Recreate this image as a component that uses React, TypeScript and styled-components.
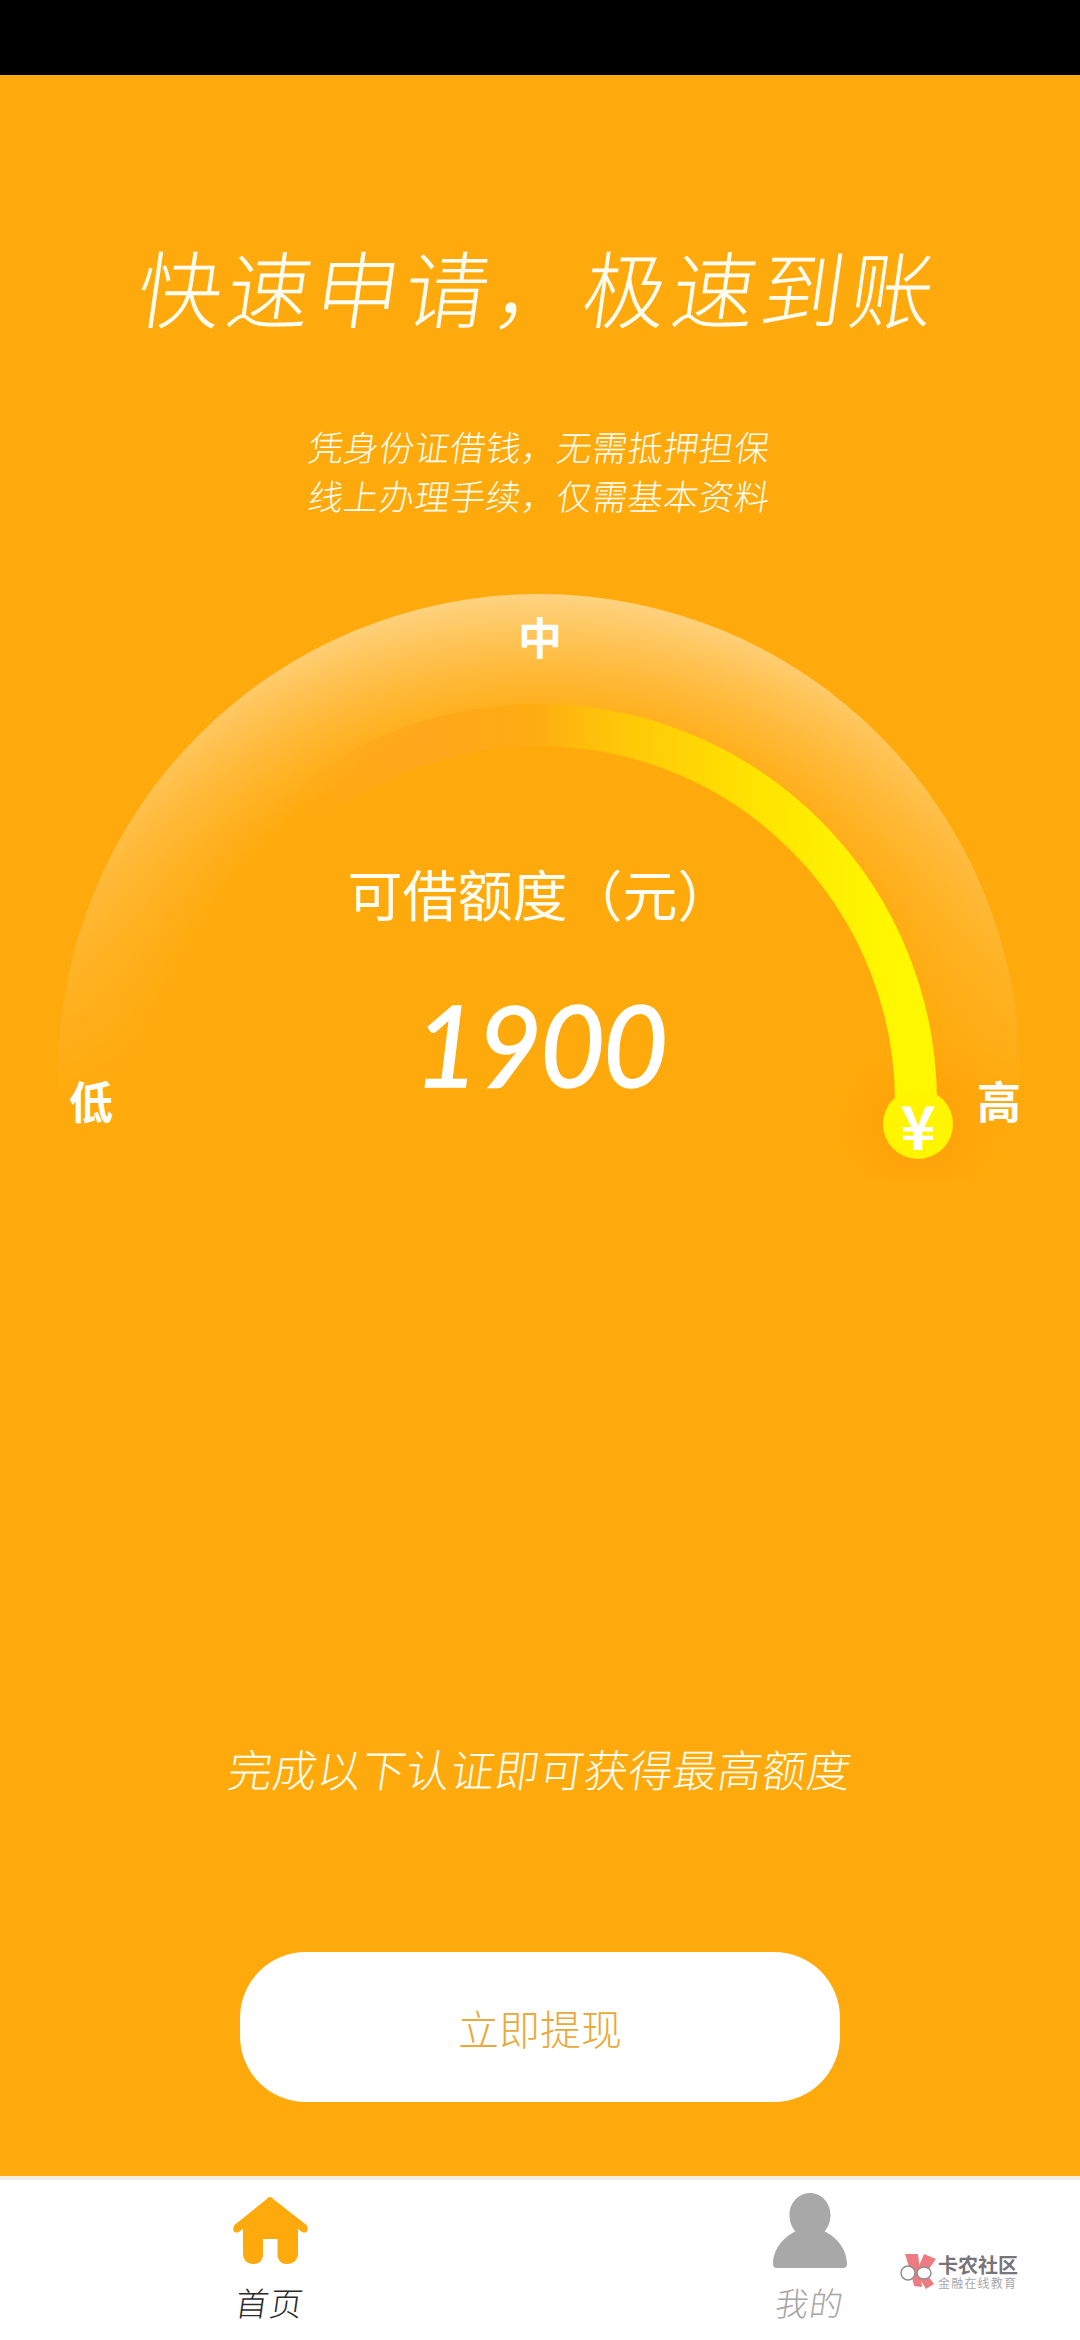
import React from "react";
import styled, { createGlobalStyle } from "styled-components";

const cjk = `"Noto Sans CJK SC", "Noto Sans", sans-serif`;

const GlobalStyle = createGlobalStyle`
  html, body { margin: 0; padding: 0; background: #ffaa0c; }
  * { box-sizing: border-box; }
`;

const Page = styled.div`
  width: 1080px;
  height: 2340px;
  display: flex;
  flex-direction: column;
  overflow: hidden;
  font-family: ${cjk};
  background: #ffaa0c;
`;

const StatusBar = styled.div`
  height: 75px;
  flex: none;
  background: #000;
`;

const Main = styled.main`
  flex: 1;
  display: flex;
  flex-direction: column;
  align-items: center;
  color: #fffdf2;
`;

const Title = styled.h1`
  margin: 156px 0 0;
  font-size: 84px;
  line-height: 110px;
  font-weight: 300;
  letter-spacing: 5px;
  white-space: nowrap;
  transform: skewX(-8deg);
`;

const Subtitle = styled.div`
  margin-top: 80px;
`;

const SubtitleLine = styled.p`
  margin: 0;
  font-size: 35px;
  line-height: 49px;
  font-weight: 300;
  text-align: center;
  white-space: nowrap;
  letter-spacing: 0.5px;
  transform: skewX(-8deg);
`;

const Gauge = styled.section`
  position: relative;
  margin-top: 72px;
  width: 1080px;
  height: 590px;
  display: flex;
  flex-direction: column;
  align-items: center;
  padding-top: 266px;
`;

const GaugeArt = styled.svg`
  position: absolute;
  left: 0;
  top: 0;
`;

const Level = styled.span<{ $left: number; $top: number }>`
  position: absolute;
  left: ${(p) => p.$left}px;
  top: ${(p) => p.$top}px;
  font-size: 44px;
  line-height: 50px;
  font-weight: 700;
  color: #fff;
`;

const Knob = styled.div`
  position: absolute;
  left: 883px;
  top: 498px;
  width: 70px;
  height: 70px;
  border-radius: 50%;
  background: #fff500;
  color: #fff;
  font-size: 60px;
  line-height: 70px;
  font-weight: 700;
  text-align: center;
`;

const QuotaLabel = styled.div`
  position: relative;
  font-size: 55px;
  line-height: 70px;
  font-weight: 400;
  white-space: nowrap;
`;

const Amount = styled.div`
  position: relative;
  margin-top: 57px;
  font-family: Lato, "Open Sans", sans-serif;
  font-style: italic;
  font-weight: 400;
  font-size: 112px;
  line-height: 120px;
  letter-spacing: -2px;
  color: #fff;
  -webkit-text-stroke: 1.5px #fff;
`;

const Hint = styled.p`
  margin: 557px 0 0;
  font-size: 44px;
  line-height: 60px;
  font-weight: 300;
  letter-spacing: 0.5px;
  white-space: nowrap;
  transform: skewX(-8deg);
`;

const CashButton = styled.button`
  margin-top: 154px;
  width: 600px;
  height: 150px;
  border: 0;
  border-radius: 66px;
  background: #fff;
  color: #eaa93a;
  font-family: ${cjk};
  font-size: 41px;
  font-weight: 300;
  display: block;
`;

const TabBar = styled.nav`
  position: relative;
  height: 164px;
  flex: none;
  background: #fff;
  border-top: 4px solid #f3eee4;
  display: grid;
  grid-template-columns: 1fr 1fr;
`;

const Tab = styled.div<{ $active?: boolean }>`
  display: flex;
  flex-direction: column;
  align-items: center;
  color: ${(p) => (p.$active ? "#2b2b2b" : "#a5a5a5")};
`;

const TabIcon = styled.svg<{ $top: number; $bottom: number }>`
  display: block;
  margin-top: ${(p) => p.$top}px;
  margin-bottom: ${(p) => p.$bottom}px;
`;

const TabLabel = styled.span`
  font-size: 33px;
  line-height: 44px;
  font-weight: 300;
  letter-spacing: 1px;
  transform: skewX(-8deg);
`;

const Watermark = styled.div`
  position: absolute;
  left: 900px;
  top: 73px;
  display: flex;
  align-items: center;
  gap: 2px;
`;

const WatermarkText = styled.div`
  display: flex;
  flex-direction: column;
  align-items: flex-start;
`;

const WatermarkName = styled.span`
  font-size: 20px;
  line-height: 22px;
  font-weight: 700;
  color: #77757a;
  white-space: nowrap;
`;

const WatermarkSlogan = styled.span`
  font-size: 12px;
  line-height: 13px;
  color: #a9a7aa;
  letter-spacing: 1.2px;
  white-space: nowrap;
`;

const HomeIcon = () => (
  <TabIcon $top={17} $bottom={16} width="76" height="67" viewBox="0 0 76 67">
    <path
      fill="#ffaa0c"
      d="M38 0c1.500 0 2.500 .8 3.500 2.300L74.500 28c2.200 3.400 1.500 7-1.500 7.500-1.500 .3-3-.2-4-1.300L66 32V56c0 7-4.500 11-11 11h-.5c-5.500 0-9-4-9-10V42H31V57c0 6-3.500 10-9 10h-.5C15 67 11 63 11 56V32l-3 2.200c-1 1.100-2.500 1.600-4 1.300-3-.5-3.700-4.100-1.500-7.500L34.500 2.300C35.500 .8 36.500 0 38 0z"
    />
  </TabIcon>
);

const PersonIcon = () => (
  <TabIcon $top={13} $bottom={12} width="74" height="75" viewBox="0 0 74 75">
    <path
      fill="#a8a8a8"
      d="M37 0c11.500 0 20.500 10 20.500 22 0 7-2.500 12.500-6 16.500C64 44 74 57 74 71c0 2.500-1.500 4-3.500 4H3.500C1.500 75 0 73.500 0 71 0 57 10 44 22.500 38.500 19 34.500 16.500 29 16.500 22 16.500 10 25.500 0 37 0z"
    />
  </TabIcon>
);

const WatermarkLogo = () => (
  <svg width="36" height="36" viewBox="0 0 36 36">
    <path fill="#ee7a82" d="M5 1h13l2 16 2 17-8-1-3-13z" />
    <path fill="#ee7a82" d="M24 1l12 5-10 14 8 11-8 5-10-16z" />
    <ellipse cx="8" cy="20" rx="7" ry="7" fill="#fff" stroke="#8f8f8f" strokeWidth="1.500" />
    <ellipse cx="24" cy="20" rx="7" ry="6" fill="#fff" stroke="#8f8f8f" strokeWidth="1.500" />
  </svg>
);

const GaugeDrawing = () => (
  <GaugeArt width="1080" height="590" viewBox="0 0 1080 590">
    <defs>
      <radialGradient id="glow" gradientUnits="userSpaceOnUse" cx="539" cy="511" r="511">
        <stop offset="0.72" stopColor="#fff" stopOpacity="0" />
        <stop offset="1" stopColor="#fff" stopOpacity="0.5" />
      </radialGradient>
      <linearGradient id="fade" gradientUnits="userSpaceOnUse" x1="0" y1="0" x2="0" y2="520">
        <stop offset="0" stopColor="#fff" />
        <stop offset="0.5" stopColor="#fff" stopOpacity="0.5" />
        <stop offset="1" stopColor="#fff" stopOpacity="0" />
      </linearGradient>
      <mask id="glowFade">
        <rect width="1080" height="590" fill="url(#fade)" />
      </mask>
      <linearGradient id="track" gradientUnits="userSpaceOnUse" x1="300" y1="0" x2="915" y2="0">
        <stop offset="0" stopColor="#ffa520" stopOpacity="0" />
        <stop offset="0.2" stopColor="#ffa71c" />
        <stop offset="0.38" stopColor="#ffac12" />
        <stop offset="0.5" stopColor="#ffc40a" />
        <stop offset="0.75" stopColor="#ffe400" />
        <stop offset="0.95" stopColor="#fff700" />
      </linearGradient>
      <radialGradient id="halo" gradientUnits="userSpaceOnUse" cx="918" cy="533" r="90">
        <stop offset="0.3" stopColor="#ffa30a" />
        <stop offset="1" stopColor="#ffa30a" stopOpacity="0" />
      </radialGradient>
    </defs>
    <path d="M58 484A481 481 0 0 1 1020 484V520H58Z" fill="url(#glow)" mask="url(#glowFade)" />
    <circle cx="918" cy="533" r="90" fill="url(#halo)" />
    <path d="M162 511A377 377 0 0 1 916 511V530" fill="none" stroke="url(#track)" strokeWidth="42" />
  </GaugeArt>
);

export default function App() {
  return (
    <Page>
      <GlobalStyle />
      <StatusBar />
      <Main>
        <Title>快速申请，极速到账</Title>
        <Subtitle>
          <SubtitleLine>凭身份证借钱，无需抵押担保</SubtitleLine>
          <SubtitleLine>线上办理手续，仅需基本资料</SubtitleLine>
        </Subtitle>
        <Gauge>
          <GaugeDrawing />
          <Level $left={518} $top={20}>中</Level>
          <Level $left={69} $top={484}>低</Level>
          <Level $left={977} $top={484}>高</Level>
          <Knob>¥</Knob>
          <QuotaLabel>可借额度（元）</QuotaLabel>
          <Amount>1900</Amount>
        </Gauge>
        <Hint>完成以下认证即可获得最高额度</Hint>
        <CashButton>立即提现</CashButton>
      </Main>
      <TabBar>
        <Tab $active>
          <HomeIcon />
          <TabLabel>首页</TabLabel>
        </Tab>
        <Tab>
          <PersonIcon />
          <TabLabel>我的</TabLabel>
        </Tab>
        <Watermark>
          <WatermarkLogo />
          <WatermarkText>
            <WatermarkName>卡农社区</WatermarkName>
            <WatermarkSlogan>金融在线教育</WatermarkSlogan>
          </WatermarkText>
        </Watermark>
      </TabBar>
    </Page>
  );
}
